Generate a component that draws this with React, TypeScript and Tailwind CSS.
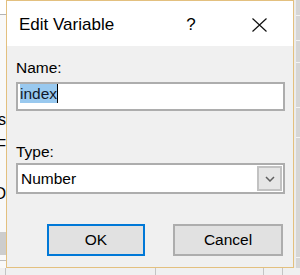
export default function App() {
  return (
    <div className="relative w-[300px] h-[275px] overflow-hidden bg-[#f7f7f7] font-['Liberation_Sans',Arial,sans-serif] text-black">
      {/* app behind the dialog */}
      <div className="flex h-[268px]">
        <div className="w-[6px] flex flex-col items-end bg-[#f9f9f9] text-[16px] leading-none">
          <div className="w-full h-[14px] bg-white" />
          <div className="w-full h-px bg-[#b4b4b4]" />
          <span className="mt-[97px] whitespace-nowrap">s</span>
          <span className="mt-[10px] whitespace-nowrap">F</span>
          <span className="mt-[32px] whitespace-nowrap">D</span>
          <div className="mt-[30px] w-full h-[23px] bg-[#cdcdcd]" />
          <div className="mt-[5px] w-full h-px bg-[#bdbdbd]" />
        </div>
        <div className="flex-1" />
        <div className="w-[6px] flex flex-col bg-[#d6d6d6] border-l-2 border-[#ececec]">
          <div className="mt-[15px] h-px bg-[#f2f2f2]" />
          <div className="mt-[24px] h-px bg-[#f2f2f2]" />
          <div className="mt-[21px] h-px bg-[#f2f2f2]" />
          <div className="mt-[44px] h-px bg-[#f2f2f2]" />
          <div className="mt-[29px] h-px bg-[#f2f2f2]" />
          <div className="mt-[119px] h-px bg-[#f2f2f2]" />
        </div>
      </div>
      <div className="flex h-[7px] bg-[#f0f0f0]">
        <div className="ml-[5px] w-px bg-[#c4c4c4]" />
        <div className="ml-[149px] w-px bg-[#c4c4c4]" />
        <div className="ml-[107px] w-px bg-[#c4c4c4]" />
        <div className="ml-[18px] w-px bg-[#c4c4c4]" />
      </div>

      {/* dialog window */}
      <div className="absolute left-[6px] top-0 w-[288px] h-[268px] border border-[#e3c07f] bg-[#f0f0f0] flex flex-col">
        <div className="h-[45px] bg-white flex">
          <div className="flex-1 flex items-center pl-[12px] pt-[2px] text-[17px] leading-none">Edit Variable</div>
          <div className="w-[68px] flex items-center justify-center pt-[2px] text-[17px] leading-none">?</div>
          <div className="w-[68px] flex items-center justify-center pt-[2px]">
            <svg width="15" height="14" viewBox="0 0 15 14">
              <path d="M0.5 0.5 L14.5 13.5 M14.5 0.5 L0.5 13.5" stroke="#111" strokeWidth="1.2" fill="none" />
            </svg>
          </div>
        </div>

        <div className="flex flex-col pl-[9px] pr-[8px] text-[15.5px]">
          <div className="mt-[14px] h-[16px] leading-[16px]">Name:</div>
          <div className="mt-[6px] h-[29px] border-2 border-[#adadad] bg-white pl-[2px] flex items-start">
            <span className="h-[19px] leading-[19px] bg-[#99c9ef] text-[#10182a]">index</span>
            <span className="w-px h-[19px] bg-black" />
          </div>

          <div className="mt-[33px] h-[16px] leading-[16px]">Type:</div>
          <div className="mt-[3px] h-[31px] border-2 border-[#adadad] bg-white flex items-stretch">
            <div className="flex-1 flex items-center pl-[3px] leading-none">Number</div>
            <div className="w-[25px] my-[1px] mr-[1px] border-2 border-[#c2c2c2] bg-[#e6e6e6] flex items-center justify-center">
              <svg width="10" height="6" viewBox="0 0 10 6">
                <path d="M1 1 L5 5 L9 1" stroke="#606060" strokeWidth="1.5" fill="none" />
              </svg>
            </div>
          </div>

          <div className="mt-[30px] ml-[31px] flex gap-[28px]">
            <div className="w-[98px] h-[32px] border-2 border-[#0078d7] bg-[#e1e1e1] flex items-center justify-center leading-none">OK</div>
            <div className="w-[110px] h-[32px] border-2 border-[#adadad] bg-[#e1e1e1] flex items-center justify-center leading-none">Cancel</div>
          </div>
        </div>
      </div>
    </div>
  );
}
